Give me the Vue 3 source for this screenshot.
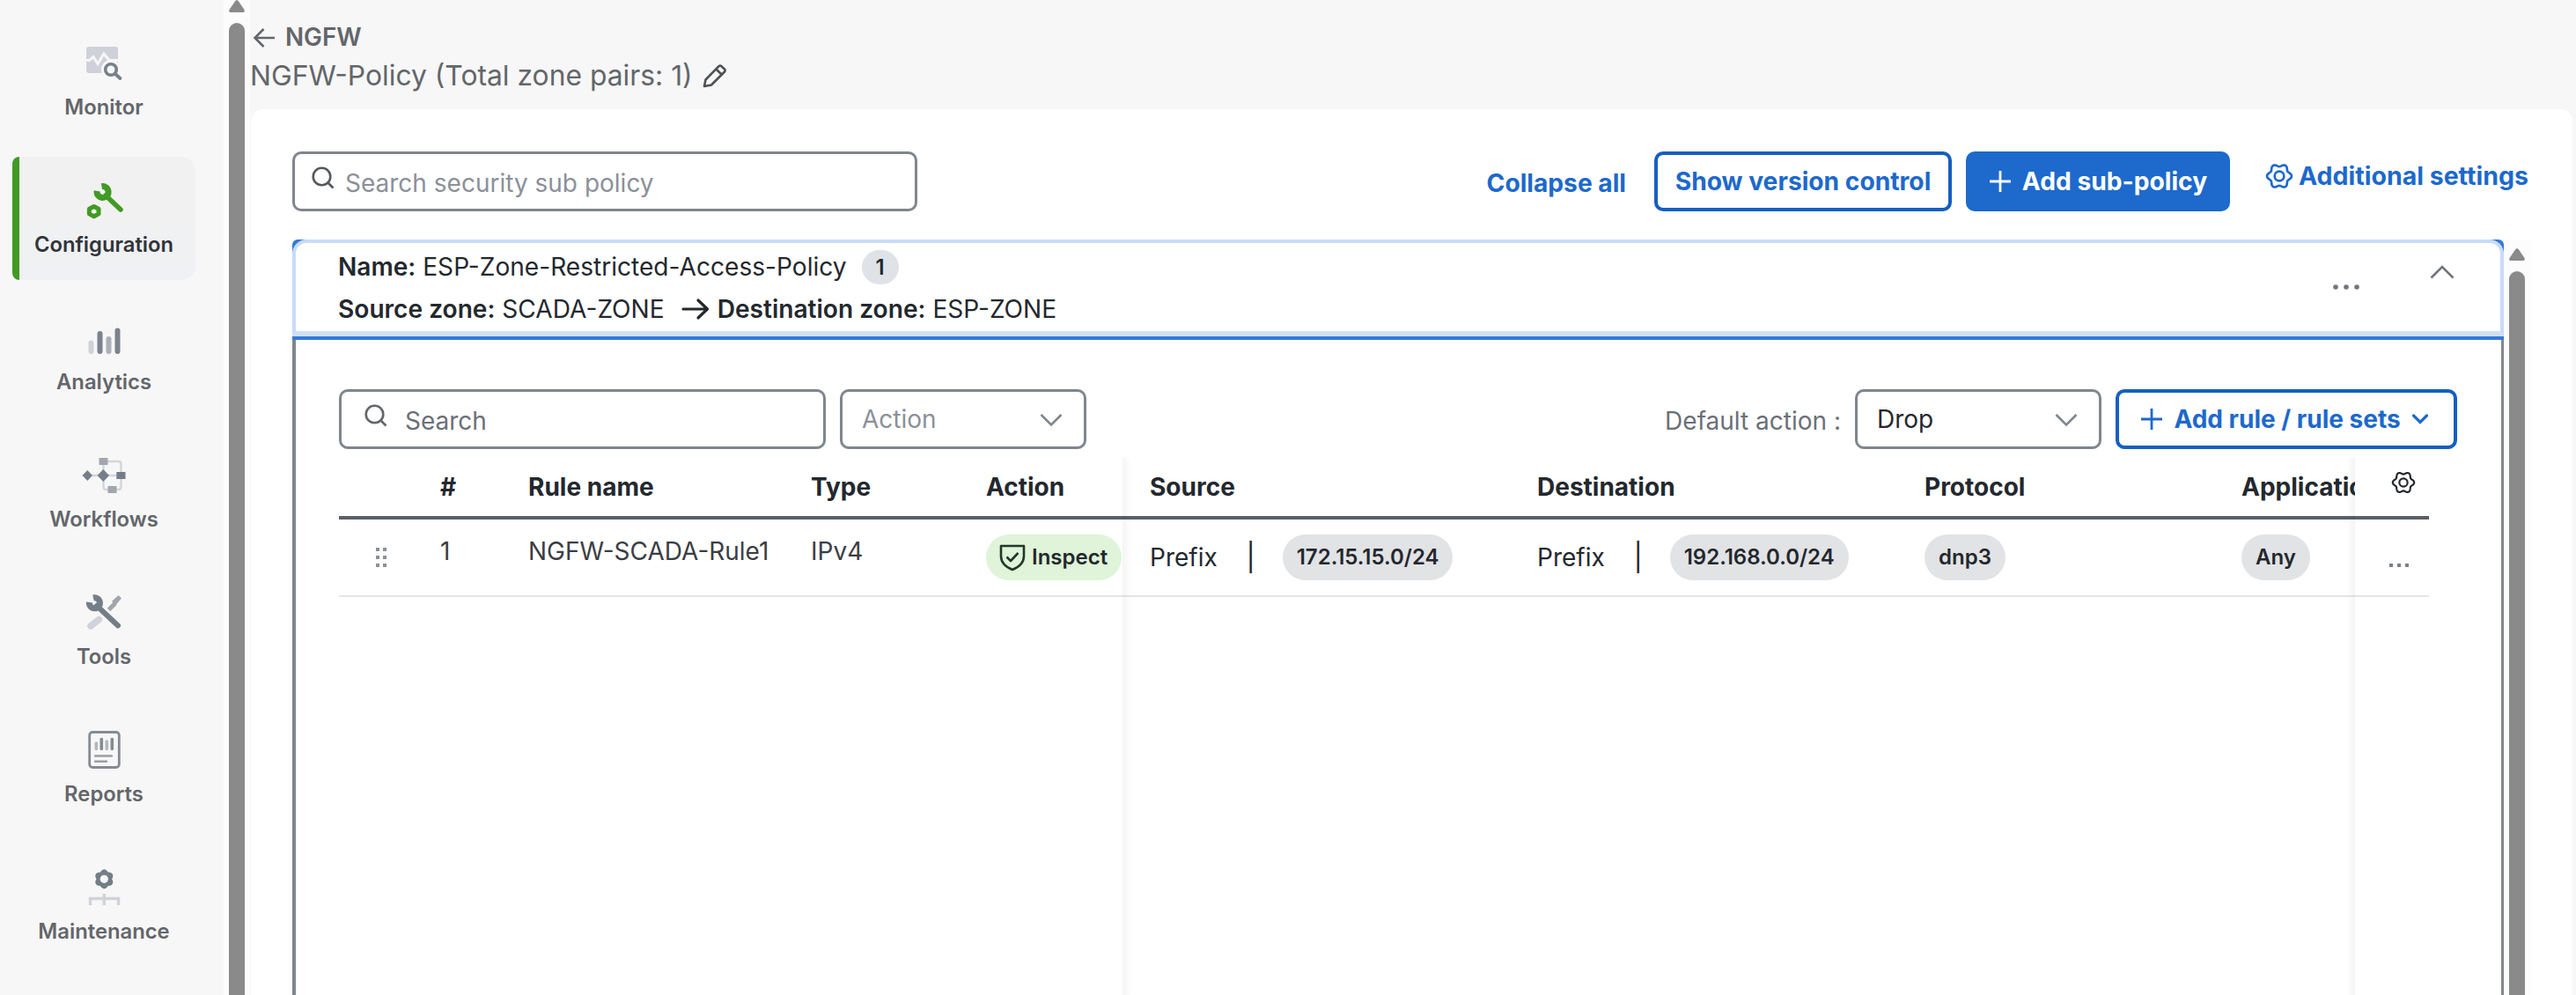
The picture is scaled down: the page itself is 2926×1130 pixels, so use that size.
<script setup>
import { ref } from "vue";

const activeItem = ref("Configuration");
const menu = [
  "Monitor",
  "Configuration",
  "Analytics",
  "Workflows",
  "Tools",
  "Reports",
  "Maintenance",
];

const rules = [
  {
    id: 1,
    name: "NGFW-SCADA-Rule1",
    type: "IPv4",
    action: "Inspect",
    source: "172.15.15.0/24",
    destination: "192.168.0.0/24",
    protocol: "dnp3",
    application: "Any",
  },
];

// wavy outline with six lobes, centred in a 30x30 box
const gearPath =
  Array.from({ length: 72 }, (_, i) => {
    const angle = (i * Math.PI) / 36;
    const radius = 11.6 + 1.5 * Math.cos(6 * angle);
    const x = (15 + radius * Math.cos(angle)).toFixed(2);
    const y = (15 + radius * Math.sin(angle)).toFixed(2);
    return `${i ? "L" : "M"}${x} ${y}`;
  }).join("") + "Z";
</script>

<template>
  <div class="app">
    <nav class="sidebar">
      <a
        v-for="item in menu"
        :key="item"
        class="sidebar__item"
        :class="{ 'sidebar__item--active': item === activeItem }"
      >
        <svg class="sidebar__icon" viewBox="0 0 48 48" fill="none">
          <g v-if="item === 'Monitor'">
            <rect x="4" y="5" width="36" height="30" rx="3" fill="#ced1da" />
            <path d="M3 20.5L7.500 20.500L12 16.500L17 24.500L24 13L30 20.500H41" stroke="#f7f7f7" stroke-width="3" />
            <circle cx="32" cy="31" r="11" fill="#f7f7f7" />
            <circle cx="32" cy="31" r="6.300" stroke="#78808a" stroke-width="3.600" />
            <path d="M37 36L42.500 41" stroke="#78808a" stroke-width="3.800" stroke-linecap="round" />
          </g>
          <g v-else-if="item === 'Configuration'">
            <path d="M21.500 7.600A6.500 6.500 0 1 1 16.200 12.800" stroke="#419a24" stroke-width="7" />
            <path d="M26 18L43 34" stroke="#419a24" stroke-width="5.500" stroke-linecap="round" />
            <path d="M12.700 30.500L18 33.300V38.900L12.700 41.700L7.400 38.900V33.300Z" stroke="#419a24" stroke-width="5" stroke-linejoin="round" />
          </g>
          <g v-else-if="item === 'Analytics'" stroke-width="6" stroke-linecap="round">
            <path d="M9.500 29.500V39" stroke="#ced3d8" />
            <path d="M19.500 19V39" stroke="#7b838d" />
            <path d="M29.500 25V39" stroke="#abb0b8" />
            <path d="M39.500 15.500V39" stroke="#7b838d" />
          </g>
          <g v-else-if="item === 'Workflows'">
            <path d="M5 24H43M23.500 24V37Q23.500 40 26.500 40H40.500Q43.500 40 43.500 37V11Q43.500 8 40.500 8H23.500V24" stroke="#d3d6da" stroke-width="2.500" />
            <path d="M5.300 18L11 24L5.300 30L-.4 24Z M23.300 17L30 24L23.300 31L16.600 24Z M38.300 20H48.500V28H38.300Z" fill="#747e88" />
            <path d="M18.500 4H28.500V12H18.500Z M28.500 36H38.500V44H28.500Z" fill="#a2a7ad" />
          </g>
          <g v-else-if="item === 'Tools'">
            <path d="M9 39L18.500 31.500" stroke="#d0d3d7" stroke-width="7.500" stroke-linecap="round" />
            <path d="M29.500 20.500L37 13" stroke="#a0a6ad" stroke-width="5" />
            <path d="M33 11L40.500 4L44 7.500L37.500 15Z" fill="#a0a6ad" />
            <path d="M12 7A6 6 0 1 1 7.500 12" stroke="#747e88" stroke-width="7" />
            <path d="M16 16L40 38.500" stroke="#747e88" stroke-width="6" stroke-linecap="round" />
          </g>
          <g v-else-if="item === 'Reports'">
            <rect x="7.700" y="3.500" width="33.600" height="40" rx="3.500" stroke="#858b93" stroke-width="2.800" />
            <path d="M15.300 16V22.500M27.300 14V22.500" stroke="#b3b7bc" stroke-width="3.600" stroke-linecap="round" />
            <path d="M21.300 11.500V22.500M33.300 11.500V22.500" stroke="#858b93" stroke-width="3.600" stroke-linecap="round" />
            <path d="M14 30.500H33M14 36.700H27" stroke="#9a9fa6" stroke-width="2.400" stroke-linecap="round" />
          </g>
          <g v-else>
            <path :d="gearPath" transform="translate(24.3 14.3) rotate(30) scale(.68) translate(-15 -15)" fill="#747e88" stroke="#747e88" stroke-width="6" />
            <circle cx="24.300" cy="14.300" r="4.600" fill="#f7f7f7" />
            <path d="M8.500 44V36.500H40.500V44M24.300 31V44" stroke="#d0d3d7" stroke-width="3.400" />
          </g>
        </svg>
        <span>{{ item }}</span>
      </a>
    </nav>

    <div class="scroll scroll--page">
      <svg class="scroll__arrow" viewBox="0 0 18 14"><path d="M9 0Q10 0 11 1.500L17.500 11Q18.500 14 16 14H2Q-.5 14 .5 11L7 1.500Q8 0 9 0Z" fill="#8a8a8a" /></svg>
      <div class="scroll__thumb"></div>
    </div>

    <main class="main">
      <header class="header">
        <div class="header__back">
          <svg width="26" height="24" viewBox="0 0 26 24" fill="none" stroke="#63666a" stroke-width="2.600"><path d="M25 13H2.500M12.500 3L2.500 13L12.500 23" /></svg>
          <span>NGFW</span>
        </div>
        <div class="header__title">
          <span>NGFW-Policy (Total zone pairs: 1)</span>
          <svg width="30" height="30" viewBox="0 0 30 30" fill="none" stroke="#4d5054" stroke-width="2.600" stroke-linejoin="round"><path d="M3 27L4.500 19.500L19.500 4.200Q21 3 22.500 4.200L26 7.600Q27.200 9 26 10.500L11 25.500ZM16.500 7.500L22.500 13.500" /></svg>
        </div>
      </header>

      <section class="card">
        <div class="toolbar">
          <div class="field field--policy">
            <svg width="26" height="26" viewBox="0 0 26 26" fill="none" stroke="#55585c" stroke-width="2.600"><circle cx="11.500" cy="11.500" r="9.800" /><path d="M18.500 18.500L24.500 24.500" /></svg>
            <span>Search security sub policy</span>
          </div>
          <a class="link link--collapse">Collapse all</a>
          <button class="btn btn--version">Show version control</button>
          <button class="btn btn--primary">
            <svg width="26" height="26" viewBox="0 0 26 26" stroke="currentColor" stroke-width="2.800"><path d="M13 1V25M1 13H25" /></svg>
            <span>Add sub-policy</span>
          </button>
          <a class="link link--settings">
            <svg width="32" height="32" viewBox="0 0 30 30" fill="none" stroke="currentColor" stroke-width="2.500"><path :d="gearPath" /><circle cx="15" cy="15" r="5" /></svg>
            <span>Additional settings</span>
          </a>
        </div>

        <div class="content">
          <div class="panel">
            <div class="panel__head">
              <div class="panel__head-inner">
                <div class="panel__info">
                  <div class="panel__line">
                    <span><b>Name:</b> ESP-Zone-Restricted-Access-Policy</span>
                    <span class="badge">1</span>
                  </div>
                  <div class="panel__line">
                    <span><b>Source zone:</b> SCADA-ZONE</span>
                    <svg class="panel__arrow" width="32" height="26" viewBox="0 0 32 26" fill="none" stroke="#23282e" stroke-width="3.200" stroke-linecap="round" stroke-linejoin="round"><path d="M2 13H29M19 3L29.500 13L19 23" /></svg>
                    <span><b>Destination zone:</b> ESP-ZONE</span>
                  </div>
                </div>
                <svg class="panel__more" width="32" height="8" viewBox="0 0 32 8" fill="#6f757d"><circle cx="4" cy="4" r="2.800" /><circle cx="16" cy="4" r="2.800" /><circle cx="28" cy="4" r="2.800" /></svg>
                <svg class="panel__toggle" width="28" height="16" viewBox="0 0 28 16" fill="none" stroke="#6f757d" stroke-width="2.600"><path d="M1.500 14.500L14 2L26.500 14.500" /></svg>
              </div>
            </div>

            <div class="panel__body">
              <div class="filters">
                <div class="field field--search">
                  <svg width="26" height="26" viewBox="0 0 26 26" fill="none" stroke="#63666a" stroke-width="2.600"><circle cx="11.500" cy="11.500" r="9.800" /><path d="M18.500 18.500L24.500 24.500" /></svg>
                  <span>Search</span>
                </div>
                <div class="select select--muted">
                  <span>Action</span>
                  <svg width="26" height="16" viewBox="0 0 26 16" fill="none" stroke="#7f868e" stroke-width="2.600"><path d="M1.500 2L13 13.500L24.500 2" /></svg>
                </div>
                <span class="filters__label">Default action :</span>
                <div class="select select--default">
                  <span>Drop</span>
                  <svg width="26" height="16" viewBox="0 0 26 16" fill="none" stroke="#7f868e" stroke-width="2.600"><path d="M1.500 2L13 13.500L24.500 2" /></svg>
                </div>
                <button class="btn btn--rule">
                  <svg width="26" height="26" viewBox="0 0 26 26" stroke="currentColor" stroke-width="2.800"><path d="M13 1V25M1 13H25" /></svg>
                  <span>Add rule / rule sets</span>
                  <svg width="20" height="14" viewBox="0 0 20 14" fill="none" stroke="currentColor" stroke-width="3.200" stroke-linecap="round"><path d="M2.500 3L10 10.500L17.500 3" /></svg>
                </button>
              </div>

              <div class="table">
                <div class="table__row table__row--head">
                  <span></span>
                  <span>#</span>
                  <span>Rule name</span>
                  <span>Type</span>
                  <span>Action</span>
                  <span>Source</span>
                  <span>Destination</span>
                  <span>Protocol</span>
                  <span class="table__clip">Application</span>
                  <svg class="table__gear" width="28" height="28" viewBox="0 0 30 30" fill="none" stroke="#23282e" stroke-width="2.300"><path :d="gearPath" /><circle cx="15" cy="15" r="5" /></svg>
                </div>
                <div v-for="rule in rules" :key="rule.id" class="table__row">
                  <svg class="table__drag" width="20" height="26" viewBox="0 0 20 26" fill="#8b9097">
                    <path d="M4 2h4v4h-4zM12 2h4v4h-4zM4 11h4v4h-4zM12 11h4v4h-4zM4 20h4v4h-4zM12 20h4v4h-4z" />
                  </svg>
                  <span class="table__text">{{ rule.id }}</span>
                  <span class="table__text">{{ rule.name }}</span>
                  <span class="table__text">{{ rule.type }}</span>
                  <span class="pill pill--inspect">
                    <svg width="32" height="32" viewBox="0 0 32 32" fill="none" stroke="#23382a" stroke-width="2.600" stroke-linejoin="round"><path d="M3 3H29V14.500C29 22 23.500 27 16 30C8.500 27 3 22 3 14.500Z" /><path d="M9.500 15.500L14 20L22.500 11" /></svg>
                    {{ rule.action }}
                  </span>
                  <div class="table__prefix">
                    <span>Prefix</span><i>|</i><span class="pill">{{ rule.source }}</span>
                  </div>
                  <div class="table__prefix">
                    <span>Prefix</span><i>|</i><span class="pill">{{ rule.destination }}</span>
                  </div>
                  <span class="pill">{{ rule.protocol }}</span>
                  <span class="pill">{{ rule.application }}</span>
                  <svg class="table__more" width="24" height="6" viewBox="0 0 24 6" fill="#7b8088"><path d="M1 1h4v4h-4zM10 1h4v4h-4zM19 1h4v4h-4z" /></svg>
                </div>
                <div class="table__shadow table__shadow--left"></div>
                <div class="table__shadow table__shadow--right"></div>
              </div>
            </div>
          </div>

          <div class="scroll scroll--panel">
            <svg class="scroll__arrow" viewBox="0 0 18 14"><path d="M9 0Q10 0 11 1.500L17.500 11Q18.500 14 16 14H2Q-.5 14 .5 11L7 1.500Q8 0 9 0Z" fill="#8a8a8a" /></svg>
            <div class="scroll__thumb"></div>
          </div>
        </div>
      </section>
    </main>
  </div>
</template>

<style>
body {
  margin: 0;
}
</style>

<style scoped>
.app {
  display: flex;
  width: 2926px;
  height: 1130px;
  overflow: hidden;
  background: #f7f7f7;
  color: #23282e;
  font-family: Inter, "Liberation Sans", sans-serif;
  font-size: 28px;
  line-height: 36px;
  white-space: nowrap;
}

.app * {
  box-sizing: border-box;
}

svg {
  display: block;
  flex: none;
}

/* sidebar */
.sidebar {
  display: flex;
  flex: none;
  flex-direction: column;
  gap: 16px;
  width: 254px;
  padding: 22px 32px 0 14px;
}

.sidebar__item {
  display: flex;
  flex: none;
  flex-direction: column;
  align-items: center;
  gap: 11px;
  height: 140px;
  padding-top: 26px;
  border-radius: 8px 16px 16px 8px;
  color: #63666a;
  font-size: 23.8px;
  font-weight: 600;
  line-height: 30px;
}

.sidebar__item--active {
  border-left: 8px solid #419a24;
  padding-right: 8px;
  background: linear-gradient(#f1f1f1 40%, #eff1f4);
  color: #30343a;
}

.sidebar__icon {
  width: 48px;
  height: 48px;
  overflow: visible;
}

/* scrollbars */
.scroll {
  display: flex;
  flex: none;
  flex-direction: column;
  align-items: center;
  gap: 12px;
  width: 30px;
  background: #fcfcfc;
}

.scroll--page {
  height: 1130px;
}

.scroll--panel {
  padding-top: 10px;
}

.scroll__arrow {
  width: 18px;
  height: 14px;
}

.scroll__thumb {
  flex: 1;
  width: 18px;
  border-radius: 9px 9px 0 0;
  background: #8a8a8a;
}

/* header */
.main {
  display: flex;
  flex: 1;
  flex-direction: column;
  min-width: 0;
  padding: 0 4px 0 1px;
}

.header {
  flex: none;
  height: 124px;
  padding-top: 24px;
  color: #63666a;
}

.header__back {
  display: flex;
  align-items: center;
  gap: 11px;
  padding-left: 2px;
  font-size: 27.8px;
  font-weight: 600;
}

.header__title {
  display: flex;
  align-items: center;
  gap: 10px;
  margin-top: 7px;
  margin-left: -1px;
  font-size: 31.8px;
  line-height: 38px;
}

/* card */
.card {
  display: flex;
  flex: 1;
  flex-direction: column;
  min-height: 0;
  padding: 48px 48px 0 47px;
  border-radius: 14px 14px 0 0;
  background: #fff;
}

.toolbar {
  display: flex;
  flex: none;
  align-items: center;
  height: 68px;
}

.field,
.select {
  display: flex;
  flex: none;
  align-items: center;
  height: 68px;
  border: 3px solid #7f868e;
  border-radius: 10px;
  background: #fff;
}

.field span {
  padding-top: 4px;
}

.field svg {
  margin-bottom: 8px;
}

.field--policy {
  gap: 12px;
  width: 710px;
  margin-right: auto;
  padding-left: 19px;
  color: #8b9099;
}

.link {
  color: #1d69cc;
  font-weight: 700;
}

.link--collapse {
  margin-right: 32px;
  padding-top: 4px;
  font-size: 28.2px;
}

.link--settings {
  display: flex;
  align-items: center;
  gap: 6px;
  width: 301px;
  margin-left: 40px;
  padding-bottom: 12px;
  font-size: 28.5px;
}

.btn {
  display: flex;
  flex: none;
  align-items: center;
  justify-content: center;
  height: 68px;
  padding: 0;
  border: 4px solid #155fc1;
  border-radius: 10px;
  background: #fff;
  color: #1d69cc;
  font: inherit;
  font-weight: 700;
}

.btn--version {
  width: 338px;
  margin-right: 16px;
  font-size: 28.2px;
}

.btn--primary {
  gap: 12px;
  width: 300px;
  border: 0;
  background: #1d69cc;
  color: #fff;
  font-size: 28.2px;
}

.content {
  display: flex;
  flex: 1;
  min-height: 0;
  margin-top: 32px;
}

/* policy panel */
.panel {
  display: flex;
  flex: none;
  flex-direction: column;
  width: 2512px;
}

.panel__head {
  flex: none;
  height: 114px;
  border-bottom: 4px solid #3579d8;
  border-radius: 6px 6px 0 0;
  background: #3579d8;
}

.panel__head-inner {
  display: flex;
  height: 110px;
  padding: 7px 52px 0 48px;
  border: 4px solid #c8dcfa;
  border-bottom: 6px solid #d1e1f5;
  border-radius: 16px 16px 0 0;
  background: #fff;
}

.panel__info {
  display: flex;
  flex: 1;
  flex-direction: column;
  gap: 8px;
}

.panel__line {
  display: flex;
  align-items: center;
  height: 40px;
  font-size: 28.1px;
}

.panel__line b {
  font-weight: 600;
}

.panel__arrow {
  margin: 0 9px 0 19px;
}

.badge {
  width: 42px;
  margin-left: 17px;
  border-radius: 20px;
  background: #dfe3e8;
  font-size: 24px;
  font-weight: 600;
  line-height: 39px;
  text-align: center;
}

.panel__more {
  margin: 39px 79px 0 0;
}

.panel__toggle {
  margin-top: 18px;
}

.panel__body {
  display: flex;
  flex: 1;
  flex-direction: column;
  padding: 56px 49px 0;
  border: solid #7f868e;
  border-width: 0 3px 0 4px;
}

.filters {
  display: flex;
  align-items: center;
}

.field--search {
  gap: 20px;
  width: 553px;
  margin-right: 16px;
  padding-left: 26px;
  color: #6b7078;
}

.select {
  justify-content: space-between;
  width: 280px;
  padding: 0 24px 0 22px;
}

.select svg {
  margin-top: 2px;
}

.select--muted {
  color: #8b9099;
}

.select--default {
  margin-right: 16px;
}

.filters__label {
  margin: 4px 16px 0 auto;
  color: #6b7078;
}

.btn--rule {
  gap: 12px;
  width: 388px;
  margin-right: 1px;
  padding-right: 4px;
}

/* rules table */
.table {
  position: relative;
  flex: 1;
  width: 2374px;
  margin-top: 10px;
}

.table__row {
  display: grid;
  grid-template-columns: 115px 100px 321px 199px 186px 440px 440px 360px 129px 84px;
  align-items: center;
  height: 88px;
  border-bottom: 2px solid #e3e6e9;
}

.table__row--head {
  height: 70px;
  border-bottom: 4px solid #5a6067;
  font-weight: 700;
}

.table__clip {
  overflow: hidden;
}

.table__gear {
  margin: 0 0 10px 41px;
}

.table__drag {
  margin-left: 38px;
}

.table__text {
  padding-bottom: 14px;
  color: #3a3e44;
}

.table__more {
  margin: 18px 0 0 38px;
}

.table__prefix {
  display: flex;
  align-items: center;
}

.table__prefix i {
  width: 12px;
  margin: 0 30px 0 32px;
  font-size: 31px;
  font-style: normal;
  text-align: center;
}

.pill {
  display: flex;
  align-items: center;
  justify-self: start;
  height: 52px;
  padding: 0 16px;
  border-radius: 26px;
  background: #e2e3e5;
  font-size: 24px;
  font-weight: 600;
}

.pill--inspect {
  gap: 6px;
  padding: 0 16px 0 14px;
  background: #dff4d8;
}

/* edges of the pinned columns */
.table__shadow {
  position: absolute;
  top: 0;
  bottom: 0;
  width: 10px;
}

.table__shadow--left {
  left: 890px;
  background: linear-gradient(to right, rgba(0, 0, 0, 0.045), transparent);
}

.table__shadow--right {
  left: 2280px;
  background: linear-gradient(to left, rgba(0, 0, 0, 0.045), transparent);
}
</style>
